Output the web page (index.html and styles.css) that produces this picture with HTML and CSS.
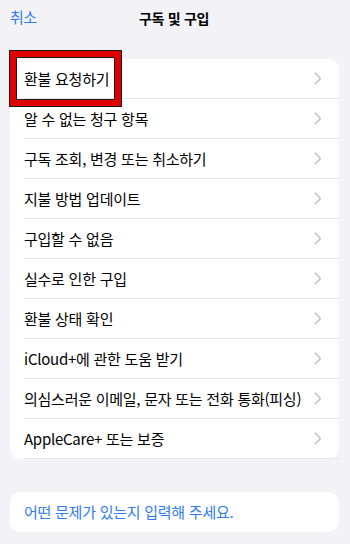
FILE: index.html
```html
<!DOCTYPE html>
<html lang="ko">
<head>
<meta charset="utf-8">
<link rel="stylesheet" href="styles.css">
</head>
<body>
<header class="nav">
  <span class="nav-cancel">취소</span>
  <span class="nav-title">구독 및 구입</span>
</header>
<section class="card list">
  <div class="row"><span class="label">환불 요청하기</span><svg class="chev" width="8" height="13" viewBox="0 0 8 13"><polyline points="1.2,1.2 6.5,6.5 1.2,11.8" fill="none" stroke="#c4c4c8" stroke-width="1.6" stroke-linecap="round" stroke-linejoin="round"/></svg></div>
  <div class="row"><span class="label">알 수 없는 청구 항목</span><svg class="chev" width="8" height="13" viewBox="0 0 8 13"><polyline points="1.2,1.2 6.5,6.5 1.2,11.8" fill="none" stroke="#c4c4c8" stroke-width="1.6" stroke-linecap="round" stroke-linejoin="round"/></svg></div>
  <div class="row"><span class="label">구독 조회, 변경 또는 취소하기</span><svg class="chev" width="8" height="13" viewBox="0 0 8 13"><polyline points="1.2,1.2 6.5,6.5 1.2,11.8" fill="none" stroke="#c4c4c8" stroke-width="1.6" stroke-linecap="round" stroke-linejoin="round"/></svg></div>
  <div class="row"><span class="label">지불 방법 업데이트</span><svg class="chev" width="8" height="13" viewBox="0 0 8 13"><polyline points="1.2,1.2 6.5,6.5 1.2,11.8" fill="none" stroke="#c4c4c8" stroke-width="1.6" stroke-linecap="round" stroke-linejoin="round"/></svg></div>
  <div class="row"><span class="label">구입할 수 없음</span><svg class="chev" width="8" height="13" viewBox="0 0 8 13"><polyline points="1.2,1.2 6.5,6.5 1.2,11.8" fill="none" stroke="#c4c4c8" stroke-width="1.6" stroke-linecap="round" stroke-linejoin="round"/></svg></div>
  <div class="row"><span class="label">실수로 인한 구입</span><svg class="chev" width="8" height="13" viewBox="0 0 8 13"><polyline points="1.2,1.2 6.5,6.5 1.2,11.8" fill="none" stroke="#c4c4c8" stroke-width="1.6" stroke-linecap="round" stroke-linejoin="round"/></svg></div>
  <div class="row"><span class="label">환불 상태 확인</span><svg class="chev" width="8" height="13" viewBox="0 0 8 13"><polyline points="1.2,1.2 6.5,6.5 1.2,11.8" fill="none" stroke="#c4c4c8" stroke-width="1.6" stroke-linecap="round" stroke-linejoin="round"/></svg></div>
  <div class="row"><span class="label">iCloud+에 관한 도움 받기</span><svg class="chev" width="8" height="13" viewBox="0 0 8 13"><polyline points="1.2,1.2 6.5,6.5 1.2,11.8" fill="none" stroke="#c4c4c8" stroke-width="1.6" stroke-linecap="round" stroke-linejoin="round"/></svg></div>
  <div class="row"><span class="label">의심스러운 이메일, 문자 또는 전화 통화(피싱)</span><svg class="chev" width="8" height="13" viewBox="0 0 8 13"><polyline points="1.2,1.2 6.5,6.5 1.2,11.8" fill="none" stroke="#c4c4c8" stroke-width="1.6" stroke-linecap="round" stroke-linejoin="round"/></svg></div>
  <div class="row"><span class="label">AppleCare+ 또는 보증</span><svg class="chev" width="8" height="13" viewBox="0 0 8 13"><polyline points="1.2,1.2 6.5,6.5 1.2,11.8" fill="none" stroke="#c4c4c8" stroke-width="1.6" stroke-linecap="round" stroke-linejoin="round"/></svg></div>
  <div class="highlight"><div class="highlight-red"><div class="highlight-core"></div></div></div>
</section>
<section class="card input-card">
  <span class="placeholder">어떤 문제가 있는지 입력해 주세요.</span>
</section>
</body>
</html>
```
FILE: styles.css
```css
* { box-sizing: border-box; }
html, body {
  margin: 0;
  padding: 0;
}
body {
  width: 350px;
  height: 544px;
  overflow: hidden;
  background: #f2f2f7;
  font-family: "Noto Sans CJK KR", "Noto Sans", sans-serif;
  color: #000;
}
.nav {
  position: relative;
  height: 35px;
  display: flex;
  align-items: center;
  justify-content: center;
}
.nav-cancel {
  position: absolute;
  left: 10px;
  top: 7px;
  font-size: 15px;
  line-height: 20px;
  color: #2f7cf6;
  letter-spacing: -0.5px;
}
.nav-title {
  font-size: 14px;
  font-weight: 700;
  line-height: 20px;
  letter-spacing: -0.3px;
  margin-left: -2px;
}
.card {
  background: #fff;
  border-radius: 10px;
  margin: 0 11px 0 10px;
}
.list {
  position: relative;
  margin-top: 24px;
}
.row {
  height: 40px;
  display: flex;
  align-items: center;
  justify-content: space-between;
  margin-left: 14px;
  padding-right: 17px;
  border-bottom: 1px solid #e4e4e8;
}
.row:last-of-type { border-bottom: none; }
.label {
  font-size: 15px;
  line-height: 20px;
  letter-spacing: -0.25px;
  white-space: nowrap;
}
.chev { flex: none; }
.highlight {
  position: absolute;
  left: -1px;
  top: -9px;
  width: 113px;
  height: 57px;
  border: 1px solid #1a1a1a;
}
.highlight-red {
  height: 100%;
  border: 6px solid #e00000;
}
.highlight-core {
  height: 100%;
  border: 1px solid #1a1a1a;
}
.input-card {
  margin-top: 33px;
  height: 40px;
  display: flex;
  align-items: center;
  padding-left: 14px;
}
.placeholder {
  font-size: 15px;
  line-height: 20px;
  color: #2f7cf6;
  letter-spacing: -0.25px;
}
```
